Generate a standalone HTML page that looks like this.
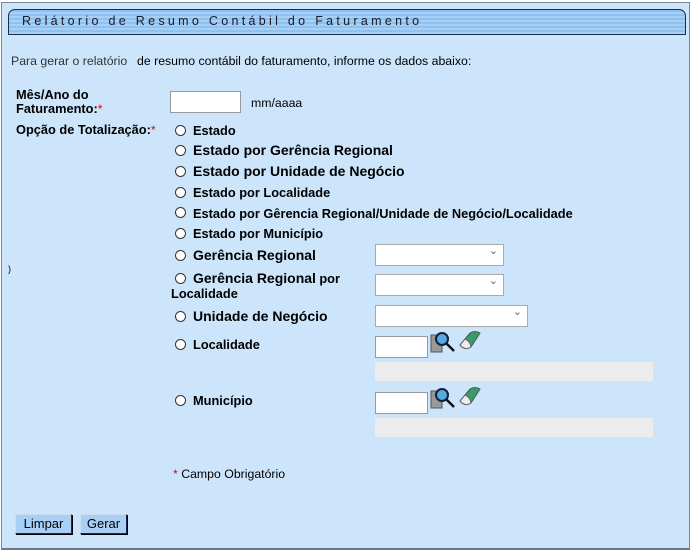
<!DOCTYPE html>
<html><head><meta charset="utf-8"><style>
body{margin:0;width:697px;height:552px;background:#fff;font-family:"Liberation Sans",Arial,sans-serif;font-size:12.3px;color:#000;position:relative;overflow:hidden}
.a{position:absolute;white-space:nowrap}
#panel{position:absolute;left:1px;top:2px;width:687px;height:545px;background:#cce5fb;border:1px solid #7a8796;border-bottom:2px solid #6a7786}
#hdr{position:absolute;left:8px;top:9px;width:676px;height:24px;border:1px solid #1c2c4c;border-radius:7px 7px 0 0;background:repeating-linear-gradient(#8fc0ee 0 2px,#a6d0f6 2px 4px)}
#hdr span{position:absolute;left:13px;top:4px;letter-spacing:3.3px;font-size:12.5px;color:#1a1a2a}
b{font-weight:bold;font-size:12.8px}
b.big{font-size:14px}
.r{color:#e00}
.rad{position:absolute;width:9px;height:9px;border:1px solid #333;border-radius:50%;background:#fff}
.inp{position:absolute;background:#fff;border:1px solid #999}
.sel{position:absolute;background:#fff;border:1px solid #aaa;height:20px}
.sel:after{content:"⌄";position:absolute;right:5px;top:-1px;font-size:11px;color:#666}
.gray{position:absolute;background:#ececec;height:19px}
.btn{position:absolute;top:514px;height:18px;background:#a8d0f6;border:1px solid #1a2a4a;border-left-color:#cde;border-top-color:#cde;box-shadow:1px 1px 0 #000;font-size:13px;text-align:center;line-height:18px}
</style></head><body>
<div id="panel"></div>
<div id="hdr"><span>Relátorio de Resumo Contábil do Faturamento</span></div>
<div class="a" style="left:11px;top:54px;color:#333">Para gerar o relatório</div>
<div class="a" style="left:137px;top:54px">de resumo contábil do faturamento, informe os dados abaixo:</div>
<div class="a" style="left:16px;top:88px;line-height:14px"><b>Mês/Ano do<br>Faturamento:</b><span class="r">*</span></div>
<div class="inp" style="left:170px;top:91px;width:69px;height:20px"></div>
<div class="a" style="left:251px;top:96px">mm/aaaa</div>
<div class="a" style="left:16px;top:122px"><b>Opção de Totalização:</b><span class="r">*</span></div>

<div class="rad" style="left:175px;top:125px"></div><div class="a" style="left:193px;top:123px"><b>Estado</b></div>
<div class="rad" style="left:175px;top:145px"></div><div class="a" style="left:193px;top:142px"><b class="big">Estado por Gerência Regional</b></div>
<div class="rad" style="left:175px;top:166px"></div><div class="a" style="left:193px;top:163px"><b class="big">Estado por Unidade de Negócio</b></div>
<div class="rad" style="left:175px;top:187px"></div><div class="a" style="left:193px;top:185px"><b>Estado por Localidade</b></div>
<div class="rad" style="left:175px;top:207px"></div><div class="a" style="left:193px;top:206px"><b>Estado por Gêrencia Regional/Unidade de Negócio/Localidade</b></div>
<div class="rad" style="left:175px;top:228px"></div><div class="a" style="left:193px;top:226px"><b>Estado por Município</b></div>
<div class="rad" style="left:175px;top:250px"></div><div class="a" style="left:193px;top:247px"><b class="big">Gerência Regional</b></div>
<div class="sel" style="left:375px;top:244px;width:127px"></div>
<div class="a" style="left:8px;top:264px;font-size:9px">)</div>
<div class="rad" style="left:175px;top:273px"></div>
<div class="a" style="left:193px;top:270px"><b class="big">Gerência Regional</b> <b>por</b></div>
<div class="a" style="left:171px;top:286px"><b>Localidade</b></div>
<div class="sel" style="left:375px;top:274px;width:127px"></div>
<div class="rad" style="left:175px;top:311px"></div><div class="a" style="left:193px;top:308px"><b class="big">Unidade de Negócio</b></div>
<div class="sel" style="left:375px;top:305px;width:151px"></div>
<div class="rad" style="left:175px;top:339px"></div><div class="a" style="left:193px;top:337px"><b>Localidade</b></div>
<div class="inp" style="left:375px;top:336px;width:51px;height:20px"></div>
<div class="gray" style="left:375px;top:362px;width:278px"></div>
<div class="rad" style="left:175px;top:395px"></div><div class="a" style="left:193px;top:393px"><b>Município</b></div>
<div class="inp" style="left:375px;top:392px;width:51px;height:20px"></div>
<div class="gray" style="left:375px;top:418px;width:278px"></div>

<svg class="a" style="left:430px;top:330px" width="28" height="24" viewBox="0 0 28 24"><rect x="1" y="5" width="11" height="17" fill="#999" stroke="#555"/><circle cx="12" cy="9" r="6" fill="#5aa8e0" stroke="#123" stroke-width="2"/><line x1="16" y1="13" x2="24" y2="21" stroke="#111" stroke-width="2.5"/></svg>
<svg class="a" style="left:458px;top:330px" width="24" height="22" viewBox="0 0 24 22"><path d="M2 15 L12 3 Q17 0 22 3 L13 17 Q7 21 2 15Z" fill="#3a9a6a" stroke="#555"/><path d="M2 15 L7 9 Q12 11 13 17 Q7 21 2 15Z" fill="#eee" stroke="#666"/></svg>
<svg class="a" style="left:430px;top:386px" width="28" height="24" viewBox="0 0 28 24"><rect x="1" y="5" width="11" height="17" fill="#999" stroke="#555"/><circle cx="12" cy="9" r="6" fill="#5aa8e0" stroke="#123" stroke-width="2"/><line x1="16" y1="13" x2="24" y2="21" stroke="#111" stroke-width="2.5"/></svg>
<svg class="a" style="left:458px;top:386px" width="24" height="22" viewBox="0 0 24 22"><path d="M2 15 L12 3 Q17 0 22 3 L13 17 Q7 21 2 15Z" fill="#3a9a6a" stroke="#555"/><path d="M2 15 L7 9 Q12 11 13 17 Q7 21 2 15Z" fill="#eee" stroke="#666"/></svg>

<div class="a" style="left:173px;top:467px"><span class="r">*</span> Campo Obrigatório</div>
<div class="btn" style="left:15px;width:55px">Limpar</div>
<div class="btn" style="left:80px;width:45px">Gerar</div>
</body></html>
